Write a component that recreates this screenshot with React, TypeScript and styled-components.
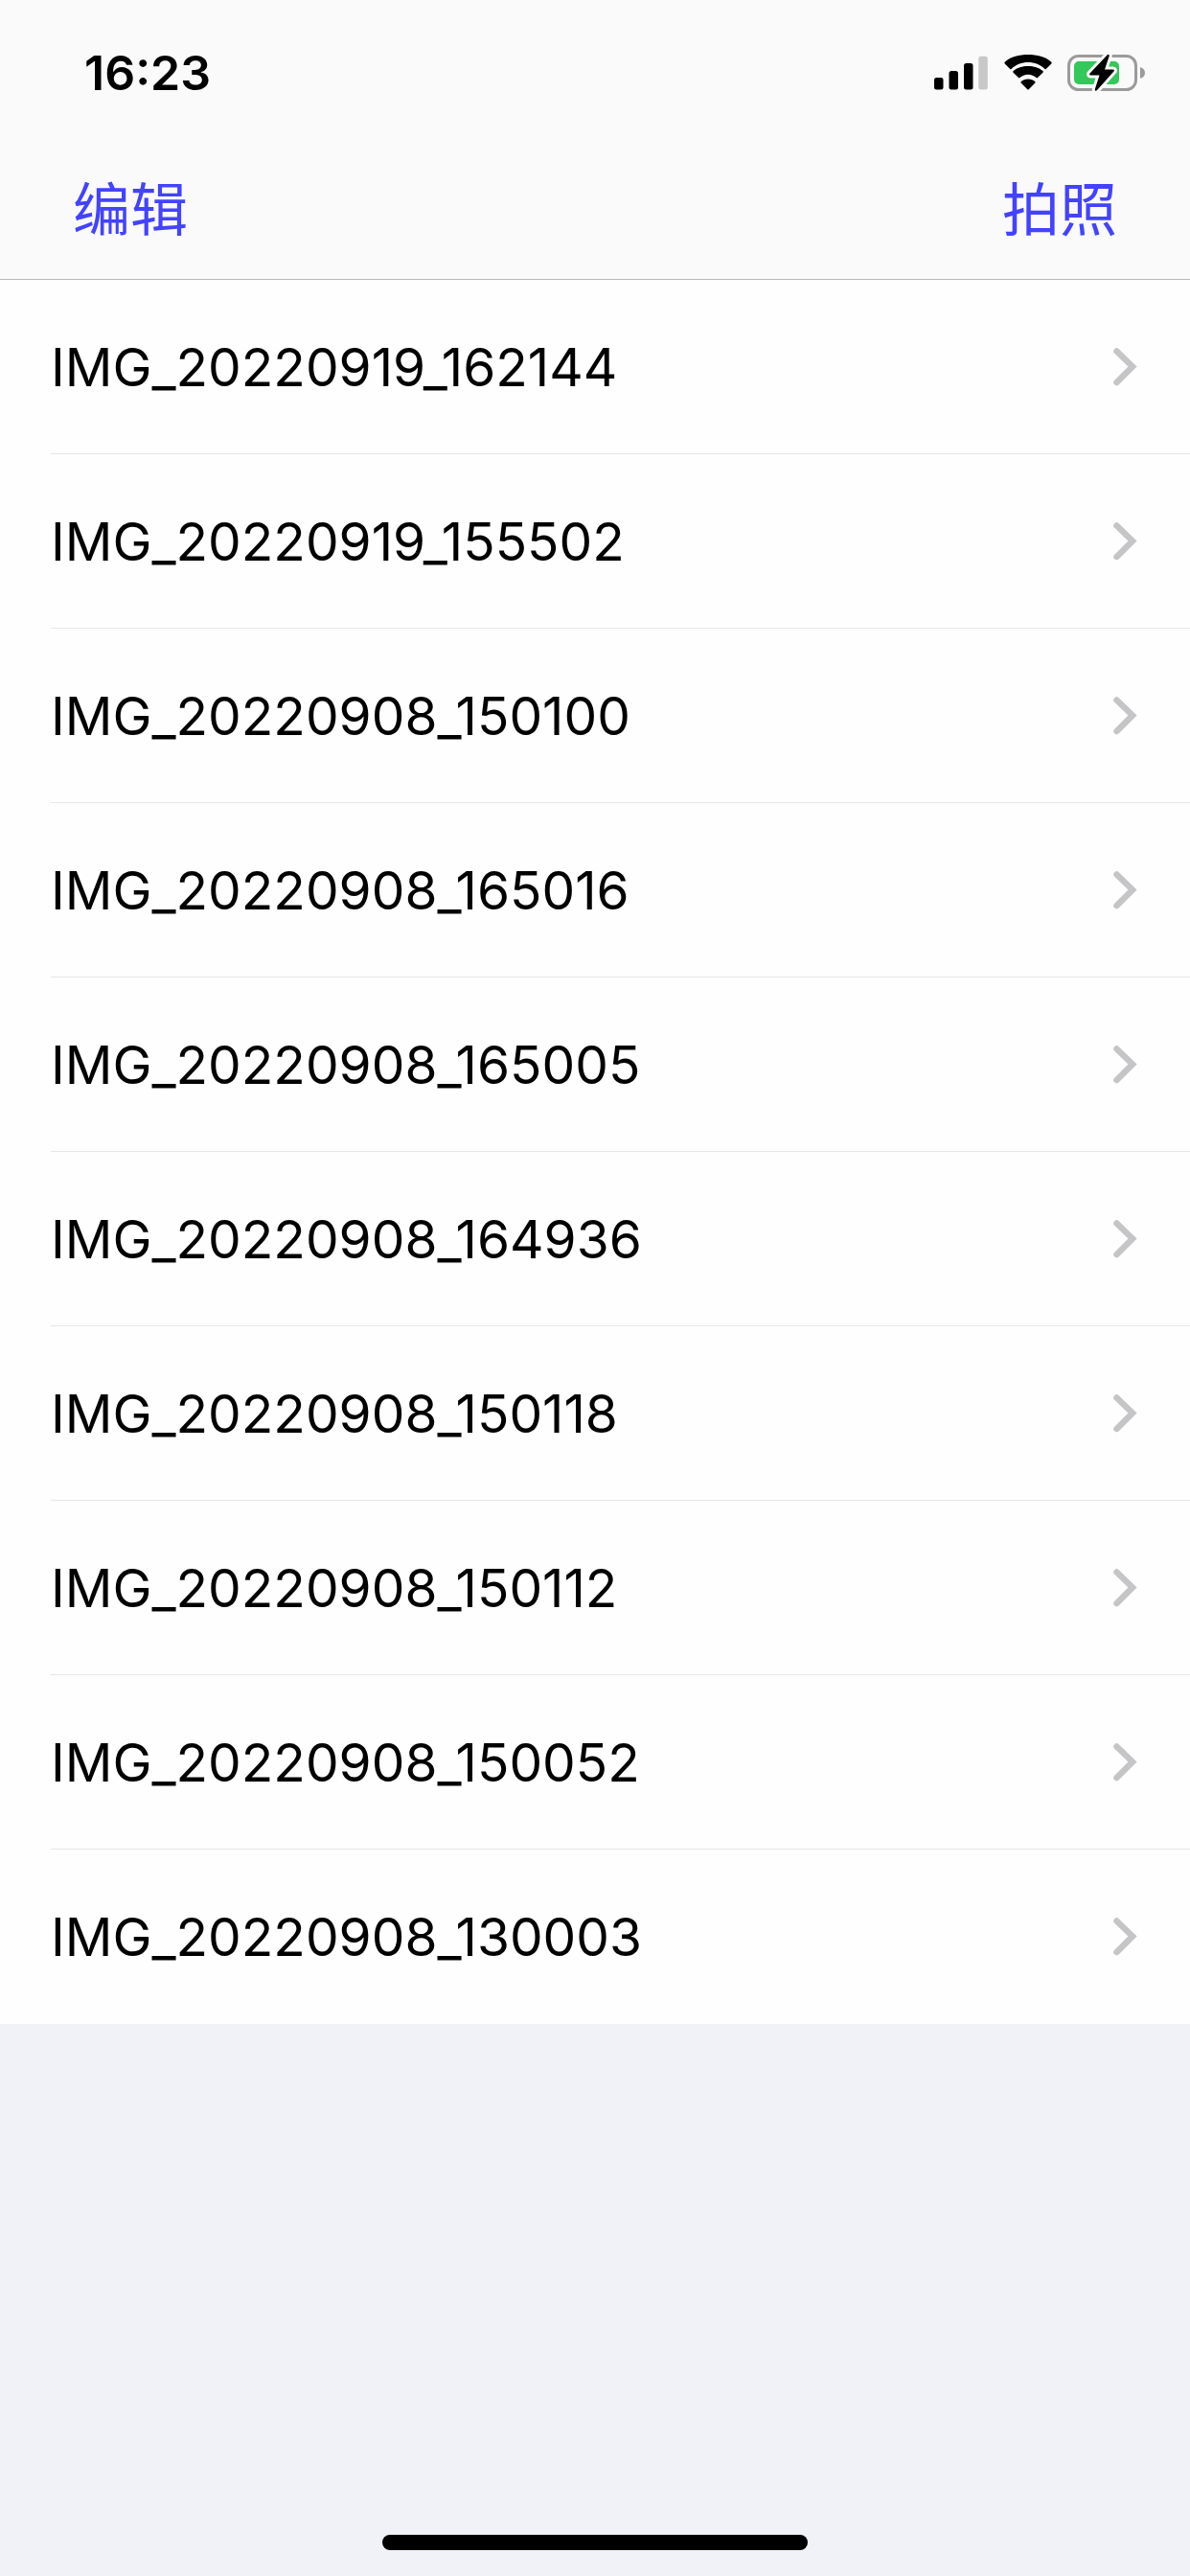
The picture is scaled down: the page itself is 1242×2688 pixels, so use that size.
import React from "react";
import styled, { createGlobalStyle } from "styled-components";

const GlobalStyle = createGlobalStyle`
  *, *::before, *::after { box-sizing: border-box; }
  body {
    margin: 0;
    background: #f1f2f7;
    color: #000;
    font-family: Inter, "Noto Sans CJK SC", sans-serif;
  }
`;

const Screen = styled.div`
  min-height: 100vh;
  display: flex;
  flex-direction: column;
`;

const Header = styled.header`
  padding-top: 20px;
  background: #fafafb;
  border-bottom: 1px solid #b8b8ba;
`;

const StatusBar = styled.div`
  height: 112px;
  padding: 0 46px 0 88px;
  display: flex;
  align-items: center;
  justify-content: space-between;
`;

const Clock = styled.time`
  font-size: 50px;
  line-height: 60px;
  font-weight: 600;
`;

const StatusIcons = styled.div`
  display: flex;
  align-items: center;
  gap: 16px;

  svg { display: block; }
`;

const NavBar = styled.nav`
  height: 159px;
  padding: 6px 76px 0;
  display: flex;
  align-items: center;
  justify-content: space-between;
`;

const NavButton = styled.button`
  padding: 0;
  border: 0;
  background: none;
  color: #4343ff;
  font: 400 60px/72px "Noto Sans CJK SC", sans-serif;
  cursor: pointer;
`;

const FileList = styled.ul`
  margin: 0;
  padding: 0;
  list-style: none;
  background: #fefefe;
`;

const FileItem = styled.li`
  padding-left: 53px;
`;

const FileLink = styled.a`
  height: 182px;
  padding-right: 53px;
  display: flex;
  align-items: center;
  justify-content: space-between;
  border-bottom: 1px solid #e6e6e8;
  color: inherit;
  font-size: 55px;
  line-height: 66px;
  text-decoration: none;

  ${FileItem}:last-child & { border-bottom-color: transparent; }
`;

const HomeArea = styled.footer`
  margin-top: auto;
  padding: 27px 0;
  display: flex;
  justify-content: center;
`;

const HomeIndicator = styled.div`
  width: 444px;
  height: 16px;
  border-radius: 8px;
  background: #000;
`;

const files = [
  "IMG_20220919_162144",
  "IMG_20220919_155502",
  "IMG_20220908_150100",
  "IMG_20220908_165016",
  "IMG_20220908_165005",
  "IMG_20220908_164936",
  "IMG_20220908_150118",
  "IMG_20220908_150112",
  "IMG_20220908_150052",
  "IMG_20220908_130003",
];

const SignalIcon = () => (
  <svg width="58" height="38" viewBox="0 0 58 38" aria-hidden="true">
    <rect x="1" y="24" width="9.5" height="12.5" rx="2.5" />
    <rect x="16.5" y="17" width="9.5" height="19.5" rx="2.5" />
    <rect x="32" y="9" width="9.5" height="27.5" rx="2.5" />
    <rect x="47.3" y="1.7" width="9.5" height="34.8" rx="2.5" fill="#c8c8c9" />
  </svg>
);

const WifiIcon = () => (
  <svg width="50" height="38" viewBox="0 0 50 38" aria-hidden="true">
    <path d="M25 8c6.700 0 12.800 2.600 17.400 6.900.4.400 1 .4 1.400 0l5.500-5.500c.5-.5.500-1.100 0-1.600C42.900 1.900 34.300 0 25 0S7.100 1.900.7 7.800c-.5.500-.5 1.100 0 1.600l5.500 5.500c.4.400 1 .4 1.400 0C12.200 10.600 18.300 8 25 8z" />
    <path d="M25 20.800c3.300 0 6.300 1.300 8.600 3.300.4.400 1 .4 1.400 0l5.500-5.400c.5-.5.500-1.100 0-1.600C36.400 13.300 31 11.900 25 11.900s-11.400 1.400-15.500 5.200c-.5.500-.5 1.100 0 1.600l5.500 5.400c.4.400 1 .4 1.400 0 2.300-2 5.300-3.300 8.600-3.300z" />
    <path d="M32.400 28.200c.4.400.4 1 0 1.400l-6.700 6.700c-.4.400-1 .4-1.400 0l-6.700-6.700c-.4-.4-.4-1 0-1.400 1.900-1.900 4.500-2.800 7.400-2.800s5.500.9 7.400 2.800z" />
  </svg>
);

const BatteryIcon = () => (
  <svg width="82" height="42" viewBox="0 0 82 42" aria-hidden="true">
    <rect x="1.500" y="3.500" width="70" height="35" rx="10" fill="none" stroke="#9b9b9c" strokeWidth="3" />
    <path d="M76 15c3.200 1 5 3.300 5 6s-1.800 5-5 6z" fill="#9b9b9c" />
    <rect x="7" y="9" width="47" height="24" rx="5" fill="#34c759" />
    <path
      d="M41.500 2.500 23.500 21.500c-.8.900-.4 2 .8 2h9.200l-4.600 14.300c-.6 2 1 2.700 2.200 1.300l17.400-19.600c.8-.9.400-2-.8-2h-8.700l4.600-13.700c.5-1.900-1-2.600-2.100-1.300z"
      stroke="#fafafb"
      strokeWidth="6"
      strokeLinejoin="round"
      paintOrder="stroke"
    />
  </svg>
);

const Chevron = () => (
  <svg width="28" height="42" viewBox="0 0 28 42" aria-hidden="true">
    <path d="M4.500 4.500 21 20.500 4.500 37" fill="none" stroke="#c5c5c7" strokeWidth="6.500" strokeLinecap="round" />
  </svg>
);

export default function App() {
  return (
    <Screen>
      <GlobalStyle />
      <Header>
        <StatusBar>
          <Clock>16:23</Clock>
          <StatusIcons>
            <SignalIcon />
            <WifiIcon />
            <BatteryIcon />
          </StatusIcons>
        </StatusBar>
        <NavBar>
          <NavButton type="button">编辑</NavButton>
          <NavButton type="button">拍照</NavButton>
        </NavBar>
      </Header>
      <main>
        <FileList>
          {files.map((name) => (
            <FileItem key={name}>
              <FileLink href={`#${name}`}>
                {name}
                <Chevron />
              </FileLink>
            </FileItem>
          ))}
        </FileList>
      </main>
      <HomeArea>
        <HomeIndicator />
      </HomeArea>
    </Screen>
  );
}
